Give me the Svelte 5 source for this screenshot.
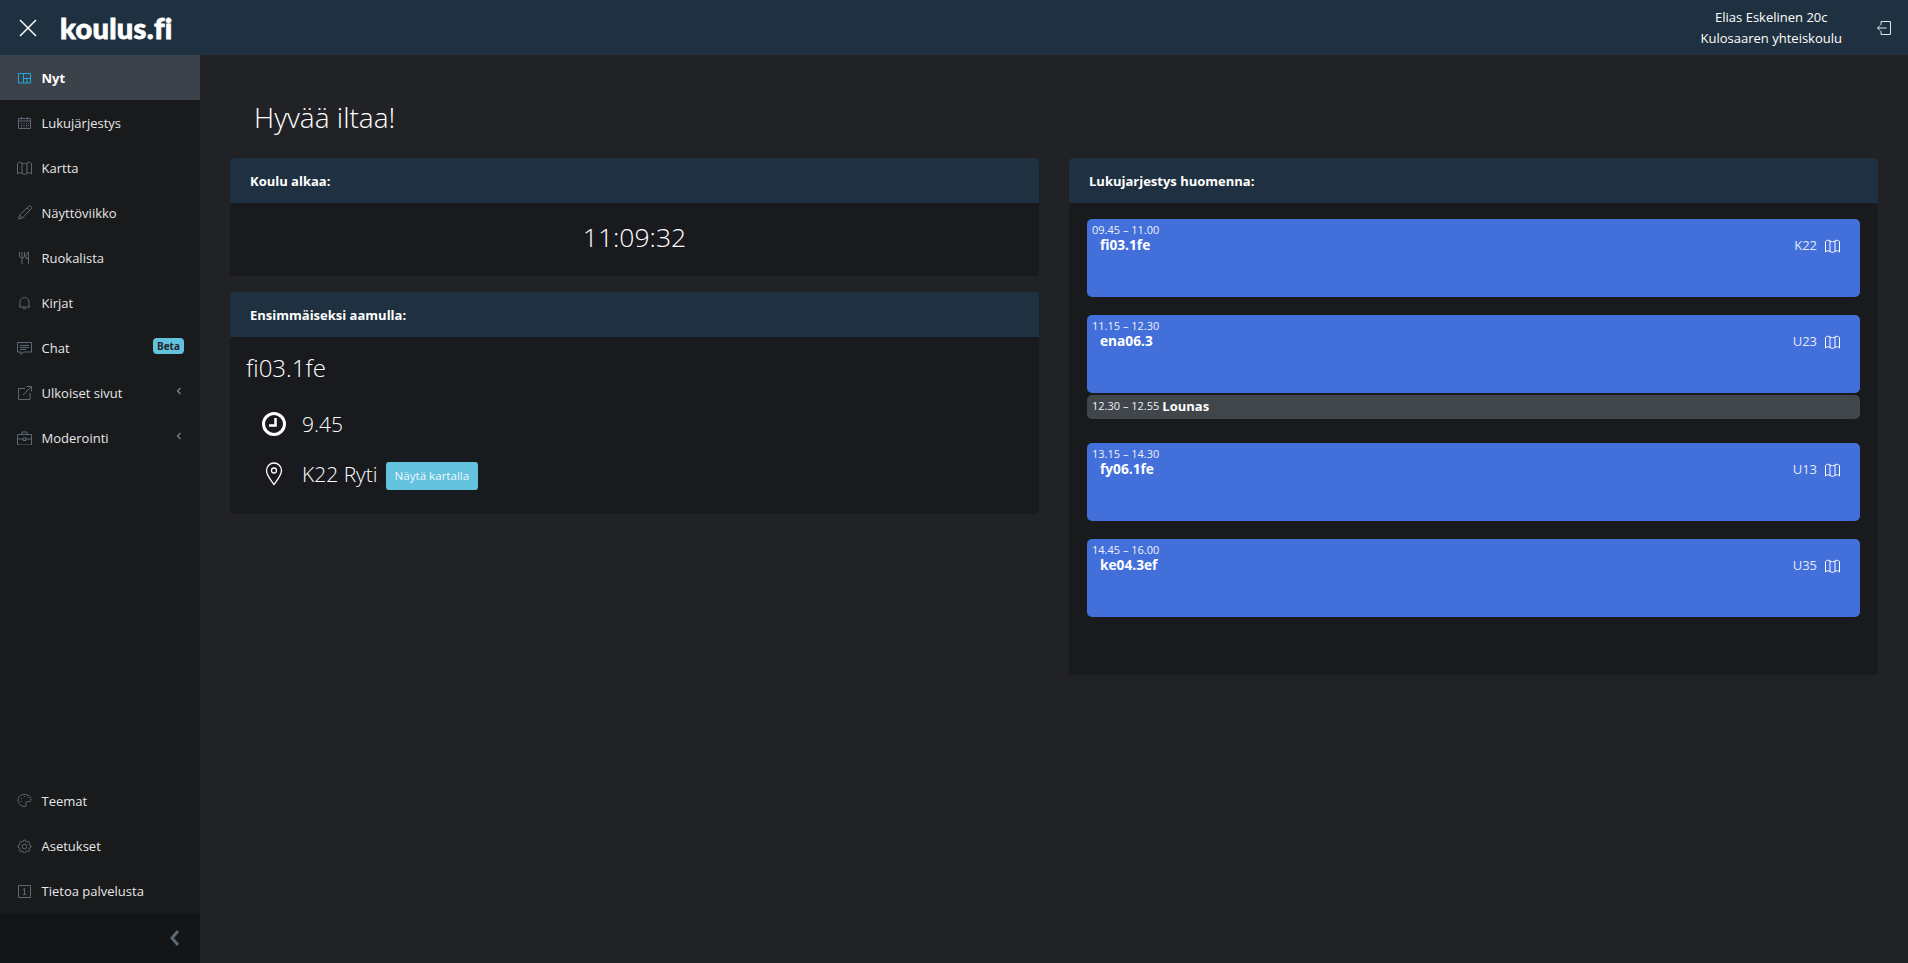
<script>
	const topNav = [
		{ name: "Nyt", icon: "dash", active: true },
		{ name: "Lukujärjestys", icon: "cal" },
		{ name: "Kartta", icon: "map" },
		{ name: "Näyttöviikko", icon: "pen" },
		{ name: "Ruokalista", icon: "food" },
		{ name: "Kirjat", icon: "bell" },
		{ name: "Chat", icon: "chat", badge: "Beta" },
		{ name: "Ulkoiset sivut", icon: "ext", caret: true },
		{ name: "Moderointi", icon: "case", caret: true }
	];
	const bottomNav = [
		{ name: "Teemat", icon: "palette" },
		{ name: "Asetukset", icon: "gear" },
		{ name: "Tietoa palvelusta", icon: "info" }
	];
	const lessons = [
		{ time: "09.45 – 11.00", name: "fi03.1fe", room: "K22" },
		{ time: "11.15 – 12.30", name: "ena06.3", room: "U23", lunch: "12.30 – 12.55" },
		{ time: "13.15 – 14.30", name: "fy06.1fe", room: "U13" },
		{ time: "14.45 – 16.00", name: "ke04.3ef", room: "U35" }
	];

	function gearPath() {
		let d = "";
		for (let i = 0; i < 8; i++) {
			for (const [r, off] of [[6.6, -0.13], [6.6, 0.13], [5.2, 0.26], [5.2, 0.52]]) {
				const a = (i * Math.PI) / 4 + off;
				d += (d ? "L" : "M") + (7.5 + r * Math.sin(a)).toFixed(2) + " " + (8.5 - r * Math.cos(a)).toFixed(2);
			}
		}
		return d + "zM7.5 6.200a2.300 2.300 0 1 0 0 4.600 2.300 2.300 0 0 0 0-4.600z";
	}

	const mapPath = "M.5 3.500C2 2 3.500 1.800 5 3c1.500 1 3.500 1 5 0 1.500-1.200 3-1 4.500.5V14c-1.500-1.500-3-1.700-4.500-.5-1.500 1-3.500 1-5 0-1.500-1.200-3-1-4.500.5zM5 3v10.500M10 3v10.500";
	const paths = {
		dash: "M1.500 3.500h12v9.500h-12zM6.500 3.500v9.500M6.500 8.500h7M10 8.500v4.500",
		cal: "M1.500 3.500h12v10h-12zM1.500 6h12M4.500 2v2.500M10.500 2v2.500M4 8.500h1M6.500 8.500h1M9 8.500h1M11 8.500h1M4 10.500h1M6.500 10.500h1M9 10.500h1M11 10.500h1M4 12h1M6.500 12h1M9 12h1",
		map: mapPath,
		pen: "M1.500 14l1-4L11.500 1.500a1.700 1.700 0 0 1 2.500 2.500L5.500 13zM2.500 10l3 3M10 3l2.500 2.500",
		food: "M2.500 2v4a2 2 0 0 0 2 2h1a2 2 0 0 0 2-2V2M5 2v12M11.500 14V2c-1.500 0-2.500 2-2.500 5v1.500h2.500",
		bell: "M3 11V7a4.500 4.500 0 0 1 9 0v4l1 1H2zM6 12.500a1.500 1.500 0 0 0 3 0",
		chat: "M.5 2.500h14v9.500H6.500l-2.500 2.500V12H.5zM3 5.500h9M3 7.500h9M3 9.500h6",
		ext: "M8 3.500H1.500V14.500H13V8M6 10L14.500 1.500M9.500 1.500h5v5",
		case: "M.5 4.500h14V15H.5zM5 4.500V2h5v2.500M.5 9h5.500M9 9h5.500M6 8h3v2.500H6z",
		palette: "M7.500 1.500C3.500 1.500 1 4 1 7c0 3.500 3 6 6 6.500 2 .3 3-1 2-2.500s0-2.500 1.500-2.500H13c.7 0 1-.8 1-1.500C14 3.500 11 1.500 7.500 1.500zM4 5.500h1M7 3.500h1M10.500 4.500h1M3.500 8.500h1",
		gear: gearPath(),
		info: "M1.500 2.500h12v12h-12zM6 6.500l1.500-1v6M6 11.500h3"
	};
</script>

<div class="page">
	<header class="topbar">
		<div class="brand">
			<svg class="close" viewBox="0 0 18 18"><path d="M1 1l16 16M17 1L1 17" /></svg>
			<span class="logo">koulus.fi</span>
		</div>
		<div class="user">
			<div class="who">
				<div>Elias Eskelinen 20c</div>
				<div>Kulosaaren yhteiskoulu</div>
			</div>
			<svg class="logout" viewBox="0 0 14 14"><path d="M4 4V.5h9.500v13H4V10M.5 7h9M.5 7l2.500-2.500M.5 7l2.500 2.500" /></svg>
		</div>
	</header>

	<div class="body">
		<aside class="sidebar">
			<nav class="nav">
				{#each topNav as item}
					<div class="item" class:active={item.active}>
						<svg class="icon" viewBox="0 0 15 15"><path d={paths[item.icon]} /></svg>
						<span class="label">{item.name}</span>
						{#if item.badge}<span class="badge">{item.badge}</span>{/if}
						{#if item.caret}<svg class="caret" viewBox="0 0 8 10"><path d="M6 1L2 5l4 4" /></svg>{/if}
					</div>
				{/each}
			</nav>
			<nav class="nav bottom">
				{#each bottomNav as item}
					<div class="item">
						<svg class="icon" viewBox="0 0 15 15"><path d={paths[item.icon]} /></svg>
						<span class="label">{item.name}</span>
					</div>
				{/each}
			</nav>
			<div class="toggle">
				<svg viewBox="0 0 10 16"><path d="M8 1L2 8l6 7" /></svg>
			</div>
		</aside>

		<main class="main">
			<h1>Hyvää iltaa!</h1>
			<div class="columns">
				<div class="col">
					<section class="card">
						<div class="card-head">Koulu alkaa:</div>
						<div class="clock">11:09:32</div>
					</section>
					<section class="card">
						<div class="card-head">Ensimmäiseksi aamulla:</div>
						<div class="first">
							<div class="course">fi03.1fe</div>
							<div class="fact">
								<svg class="fact-icon" viewBox="0 0 24 24"><circle cx="12" cy="12" r="10.500" class="thick" /><path class="thin" d="M13.500 6v7.500H7" /></svg>
								<span>9.45</span>
							</div>
							<div class="fact place">
								<svg class="fact-icon" viewBox="0 0 24 24"><path d="M12 22.500C8 17 4.500 13 4.500 8.500a7.500 7.500 0 0 1 15 0C19.500 13 16 17 12 22.500z" /><circle cx="12" cy="8.500" r="2.500" /></svg>
								<span>K22 Ryti</span>
								<span class="btn">Näytä kartalla</span>
							</div>
						</div>
					</section>
				</div>
				<div class="col">
					<section class="card">
						<div class="card-head">Lukujarjestys huomenna:</div>
						<div class="schedule">
							{#each lessons as l}
								<div class="slot" class:has-lunch={l.lunch}>
									<div class="lesson">
										<div class="time">{l.time}</div>
										<div class="row">
											<span class="lesson-name">{l.name}</span>
											<span class="room">{l.room}
												<svg viewBox="0 0 15 15"><path d={paths.map} /></svg>
											</span>
										</div>
									</div>
									{#if l.lunch}
										<div class="lunch"><span class="time">{l.lunch}</span><b>Lounas</b></div>
									{/if}
								</div>
							{/each}
						</div>
					</section>
				</div>
			</div>
		</main>
	</div>
</div>

<style>
	:global(body) {
		margin: 0;
		background: #212226;
		color: #fff;
		font-family: "Open Sans", "Noto Sans", sans-serif;
		font-size: 13px;
	}

	svg {
		fill: none;
		stroke: currentColor;
		display: block;
	}

	.page {
		height: 963px;
		display: flex;
		flex-direction: column;
		overflow: hidden;
	}

	.topbar {
		height: 55px;
		flex: none;
		background: #1f3140;
		display: flex;
		justify-content: space-between;
		align-items: center;
		padding: 0 17px 0 19px;
	}

	.brand {
		display: flex;
		align-items: center;
		gap: 23px;
	}

	.close {
		width: 18px;
		height: 18px;
		stroke-width: 1.500;
	}

	.logo {
		font-family: Lato, sans-serif;
		font-weight: 900;
		font-size: 29px;
		line-height: 1;
		letter-spacing: 0.3px;
		font-variant-ligatures: none;
		-webkit-text-stroke: 0.8px #fff;
	}

	.user {
		display: flex;
		align-items: center;
		gap: 35px;
	}

	.who {
		text-align: center;
		line-height: 21px;
	}

	.logout {
		width: 14px;
		height: 14px;
		stroke-width: 1;
		color: #dfe3e6;
	}

	.body {
		flex: 1;
		display: flex;
		min-height: 0;
	}

	.sidebar {
		width: 200px;
		flex: none;
		background: #191a1c;
		display: flex;
		flex-direction: column;
	}

	.nav {
		display: flex;
		flex-direction: column;
	}

	.bottom {
		margin-top: auto;
	}

	.item {
		height: 45px;
		display: flex;
		align-items: center;
		padding: 0 17px;
		color: #e6e7e8;
	}

	.item.active {
		background: #3c4249;
		color: #fff;
		font-weight: 700;
	}

	.icon {
		width: 15px;
		height: 15px;
		margin-right: 9.500px;
		stroke-width: 1;
		color: #5c6873;
	}

	.active .icon {
		color: #20a8d8;
	}

	.label {
		flex: 1;
		padding-top: 1px;
	}

	.badge {
		background: #63c2de;
		color: #23282c;
		font-size: 10px;
		font-weight: 700;
		padding: 0 4px;
		line-height: 16px;
		border-radius: 4px;
		margin: -3px -1px 0 0;
	}

	.caret {
		width: 6px;
		height: 8px;
		stroke-width: 1.800;
		color: #73818f;
		margin: -3px 1px 0 0;
	}

	.toggle {
		height: 50px;
		background: #141517;
		display: flex;
		justify-content: flex-end;
		align-items: center;
		padding-right: 20px;
		color: #5c6873;
	}

	.toggle svg {
		width: 10px;
		height: 16px;
		stroke-width: 3;
	}

	.main {
		flex: 1;
		padding: 43px 30px 0;
		min-width: 0;
	}

	h1 {
		font-size: 28px;
		font-weight: 300;
		line-height: 38px;
		margin: 0 0 22px 24px;
	}

	.columns {
		display: grid;
		grid-template-columns: 1fr 1fr;
		gap: 30px;
	}

	.col {
		display: flex;
		flex-direction: column;
		gap: 16px;
	}

	.card {
		background: #191a1e;
		border-radius: 4px;
		overflow: hidden;
	}

	.card-head {
		height: 45px;
		background: #1f3140;
		display: flex;
		align-items: center;
		padding-left: 20px;
		font-weight: 700;
	}

	.clock {
		height: 73px;
		display: flex;
		align-items: center;
		justify-content: center;
		font-size: 26.500px;
		font-weight: 300;
		padding-bottom: 6px;
		box-sizing: border-box;
	}

	.first {
		padding: 13px 16px 22px;
	}

	.course {
		font-size: 24px;
		font-weight: 300;
		line-height: 36px;
		margin-bottom: 20px;
	}

	.fact {
		display: flex;
		align-items: center;
		gap: 16px;
		font-size: 21px;
		font-weight: 300;
		padding-left: 16px;
		height: 36px;
		margin-bottom: 14px;
	}

	.place {
		margin-bottom: 0;
	}

	.fact-icon {
		width: 24px;
		height: 24px;
		stroke-width: 1.300;
	}

	.thick {
		stroke-width: 3;
	}

	.thin {
		stroke-width: 2.500;
	}

	.btn {
		background: #63c2de;
		font-size: 11.600px;
		font-weight: 400;
		padding: 0 9px;
		line-height: 28px;
		border-radius: 3px;
		margin: 4px 0 0 -8px;
		color: #eef8fb;
	}

	.schedule {
		padding: 16px 18px 58px;
		display: flex;
		flex-direction: column;
		gap: 18px;
	}

	.has-lunch {
		margin-bottom: 6px;
	}

	.lesson {
		height: 78px;
		background: #426fd9;
		border-radius: 5px;
		padding: 4px 5px;
		box-sizing: border-box;
	}

	.time {
		font-size: 11px;
		line-height: 14px;
		color: #eef2fb;
	}

	.row {
		display: flex;
		justify-content: space-between;
		padding: 0 15px 0 8px;
		line-height: 16px;
		font-size: 13.700px;
	}

	.lesson-name {
		font-weight: 700;
	}

	.room {
		display: flex;
		align-items: center;
		gap: 8px;
		color: #e3e9f8;
		font-size: 13px;
	}

	.room svg {
		width: 15px;
		height: 15px;
		stroke-width: 1;
		color: #fff;
	}

	.lunch {
		height: 24px;
		margin-top: 2px;
		background: #41464a;
		border-radius: 5px;
		display: flex;
		align-items: center;
		gap: 3px;
		padding: 0 5px 3px;
		box-sizing: border-box;
	}
</style>
